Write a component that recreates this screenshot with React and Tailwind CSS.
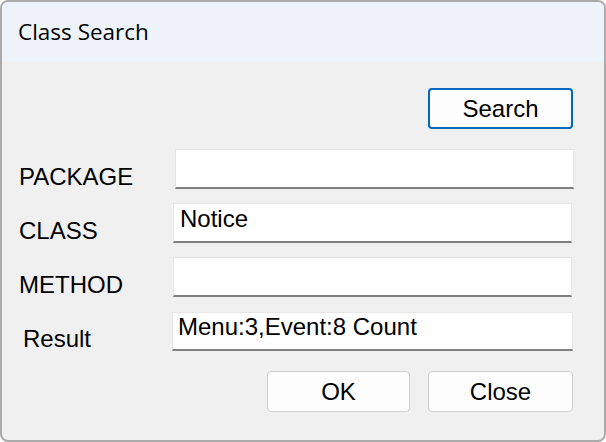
const labelFont = { fontFamily: '"Liberation Sans", Arial, sans-serif' };

function Field({ value }) {
  return (
    <div className="h-[40px] bg-white border border-[#e6e6e6] border-b-2 border-b-[#7f7f7f] pt-[3px] pl-[6px] text-[24px] leading-none text-black">
      {value}
    </div>
  );
}

function Btn({ children, primary, width }) {
  return (
    <button
      className={`${width} h-[41px] rounded-[4px] text-[24px] leading-none text-black ${
        primary
          ? "bg-[#fdfdfd] border-2 border-[#0067c0]"
          : "bg-[#fdfdfd] border border-[#cfcfcf]"
      }`}
      style={labelFont}
    >
      {children}
    </button>
  );
}

export default function App() {
  return (
    <div className="w-[606px] h-[442px] bg-white">
      <div className="w-full h-full rounded-[8px] border-2 border-[#ababab] bg-[#f0f0f0] overflow-hidden">
        <div
          className="h-[60px] bg-[#eef3f9] pl-[16px] pt-[19px] text-[22.5px] leading-none text-black"
          style={{ fontFamily: '"Open Sans", "Noto Sans", sans-serif' }}
        >
          Class Search
        </div>

        <div style={labelFont}>
          <div className="flex justify-end pr-[31px] mt-[26px]">
            <Btn primary width="w-[145px]">Search</Btn>
          </div>

          {/* PACKAGE */}
          <div className="flex items-end mt-[20px]">
            <div className="w-[173px] pl-[17px] text-[24px] leading-none">PACKAGE</div>
            <div className="w-[399px]">
              <Field value="" />
            </div>
          </div>

          {/* CLASS */}
          <div className="flex items-end mt-[14px]">
            <div className="w-[171px] pl-[17px] text-[24px] leading-none">CLASS</div>
            <div className="w-[399px]">
              <Field value="Notice" />
            </div>
          </div>

          {/* METHOD */}
          <div className="flex items-end mt-[14px]">
            <div className="w-[171px] pl-[17px] text-[24px] leading-none">METHOD</div>
            <div className="w-[399px]">
              <Field value="" />
            </div>
          </div>

          {/* Result */}
          <div className="flex items-end mt-[15px]">
            <div className="w-[170px] pl-[21px] text-[24px] leading-none">Result</div>
            <div className="w-[401px]">
              <div className="h-[39px] bg-white border border-[#e6e6e6] border-b-2 border-b-[#7f7f7f] pt-[2px] pl-[5px] text-[24px] leading-none text-black">
                Menu:3,Event:8 Count
              </div>
            </div>
          </div>

          <div className="flex justify-end gap-[18px] pr-[31px] mt-[20px]">
            <Btn width="w-[143px]">OK</Btn>
            <Btn width="w-[145px]">Close</Btn>
          </div>
        </div>
      </div>
    </div>
  );
}
